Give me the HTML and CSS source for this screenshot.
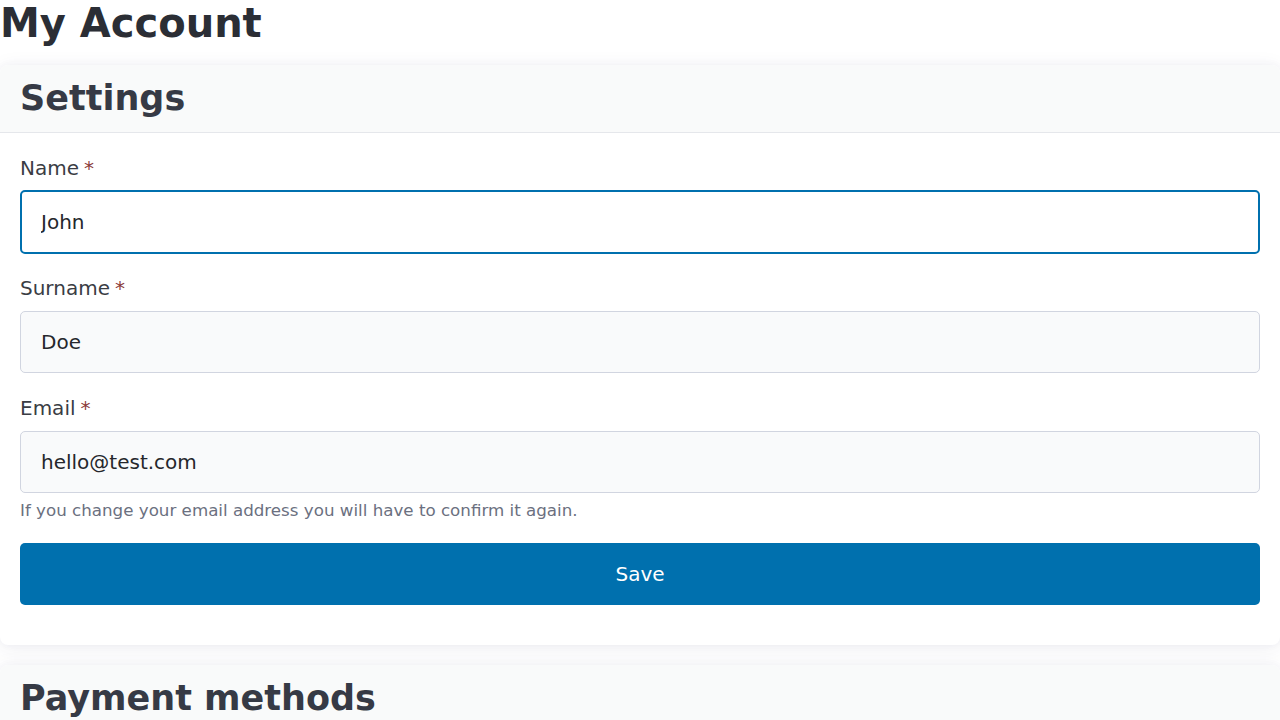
FILE: index.html
```html
<!DOCTYPE html>
<html lang="en">
<head>
<meta charset="utf-8">
<title>My Account</title>
<link rel="stylesheet" href="styles.css">
</head>
<body>
<h1 class="page-title">My Account</h1>
<section class="card">
  <header class="card-header"><h2 class="card-title">Settings</h2></header>
  <form class="card-body">
    <div class="field">
      <label class="label" for="name">Name<span class="req">*</span></label>
      <input class="input input-focus" id="name" value="John">
    </div>
    <div class="field">
      <label class="label" for="surname">Surname<span class="req">*</span></label>
      <input class="input" id="surname" value="Doe">
    </div>
    <div class="field field-last">
      <label class="label" for="email">Email<span class="req">*</span></label>
      <input class="input" id="email" value="hello@test.com">
      <p class="help">If you change your email address you will have to confirm it again.</p>
    </div>
    <button class="btn" type="button">Save</button>
  </form>
</section>
<section class="card">
  <header class="card-header"><h2 class="card-title">Payment methods</h2></header>
  <div class="card-body">
    <p class="help">No payment methods.</p>
  </div>
</section>
</body>
</html>
```
FILE: styles.css
```css
* { box-sizing: border-box; }
body {
  margin: 0;
  font-family: "DejaVu Sans", sans-serif;
  color: #2d3038;
  background: #ffffff;
}
.page-title {
  margin: 0 0 19px;
  font-size: 40px;
  line-height: 46px;
  font-weight: bold;
  color: #2b2e35;
}
.card {
  background: #ffffff;
  border-radius: 8px;
  box-shadow: 0 3px 20px rgba(50, 50, 100, 0.08), 0 0 8px rgba(50, 50, 100, 0.04);
  margin-bottom: 20px;
  overflow: hidden;
}
.card-header {
  background: #f9fafa;
  border-bottom: 1px solid #e5e7eb;
  padding: 12px 20px 13px;
}
.card-title {
  margin: 0;
  font-size: 35px;
  line-height: 42px;
  font-weight: bold;
  color: #363a45;
}
.card-body {
  padding: 20px 20px 40px;
  margin: 0;
}
.field { margin-bottom: 23px; }
.field-last { margin-bottom: 21px; }
.label {
  display: block;
  font-size: 20px;
  line-height: 24px;
  margin: 3px 0 11px;
  color: #3a3d44;
}
.req {
  color: #8b3a3a;
  margin-left: 5px;
}
.input {
  display: block;
  width: 100%;
  height: 62px;
  padding: 0 20px;
  font-family: "DejaVu Sans", sans-serif;
  font-size: 20px;
  color: #25272c;
  background: #f9fafb;
  border: 1px solid #d1d5e0;
  border-radius: 5px;
  outline: none;
}
.input-focus {
  background: #ffffff;
  border: 2px solid #0070ae;
  padding: 0 19px;
  height: 64px;
  margin-top: -1px;
  margin-bottom: -1px;
}
.help {
  margin: 5px 0 0;
  font-size: 16.7px;
  line-height: 24px;
  color: #6b7080;
}
.btn {
  display: block;
  width: 100%;
  height: 62px;
  border: none;
  border-radius: 5px;
  background: #0070ae;
  color: #ffffff;
  font-family: "DejaVu Sans", sans-serif;
  font-size: 20px;
}
```
